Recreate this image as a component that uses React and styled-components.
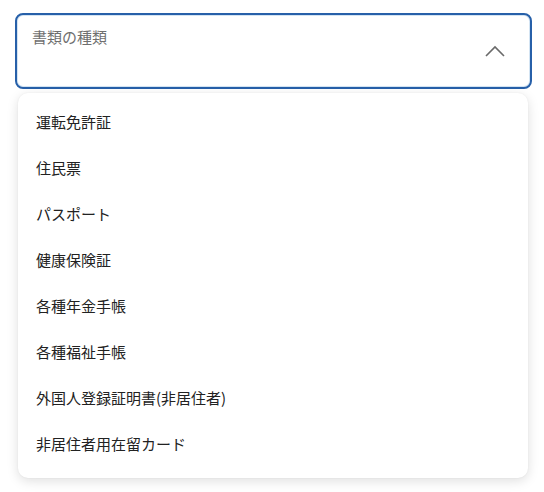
import React from "react";
import styled, { createGlobalStyle } from "styled-components";

const Global = createGlobalStyle`
  html, body { margin: 0; padding: 0; background: #ffffff; }
  body { font-family: "Noto Sans CJK JP", "Noto Sans", sans-serif; }
`;

const Page = styled.div`
  width: 544px;
  height: 492px;
  padding: 13px 0 0 15px;
  box-sizing: border-box;
  display: flex;
  flex-direction: column;
`;

const Field = styled.div`
  width: 517px;
  height: 76px;
  box-sizing: border-box;
  border: 2px solid #2760a9;
  border-radius: 8px;
  box-shadow: inset 0 0 0 1px #d3e4f3;
  background: #fff;
  padding: 11px 24px 0 15px;
  display: flex;
  justify-content: space-between;
  align-items: flex-start;
`;

const Label = styled.span`
  font-size: 15px;
  line-height: 22px;
  color: #6f6f6f;
`;

const Chevron = styled.svg`
  margin-top: 18px;
  width: 22px;
  height: 14px;
`;

const Menu = styled.ul`
  list-style: none;
  margin: 4px 0 0 3px;
  padding: 5px 0 12px;
  width: 510px;
  box-sizing: border-box;
  background: #fff;
  border-radius: 10px;
  box-shadow: 0 3px 12px rgba(0, 0, 0, 0.13), 0 0 2px rgba(0, 0, 0, 0.06);
`;

const Item = styled.li`
  height: 46px;
  display: flex;
  align-items: center;
  padding-left: 18px;
  font-size: 15px;
  color: #222;
`;

const items = [
  "運転免許証",
  "住民票",
  "パスポート",
  "健康保険証",
  "各種年金手帳",
  "各種福祉手帳",
  "外国人登録証明書(非居住者)",
  "非居住者用在留カード",
];

export default function App() {
  return (
    <>
      <Global />
      <Page>
        <Field>
          <Label>書類の種類</Label>
          <Chevron viewBox="0 0 22 14">
            <path d="M2 12 L11 3 L20 12" fill="none" stroke="#6a6a6a" strokeWidth="1.6" />
          </Chevron>
        </Field>
        <Menu>
          {items.map((t) => (
            <Item key={t}>{t}</Item>
          ))}
        </Menu>
      </Page>
    </>
  );
}
